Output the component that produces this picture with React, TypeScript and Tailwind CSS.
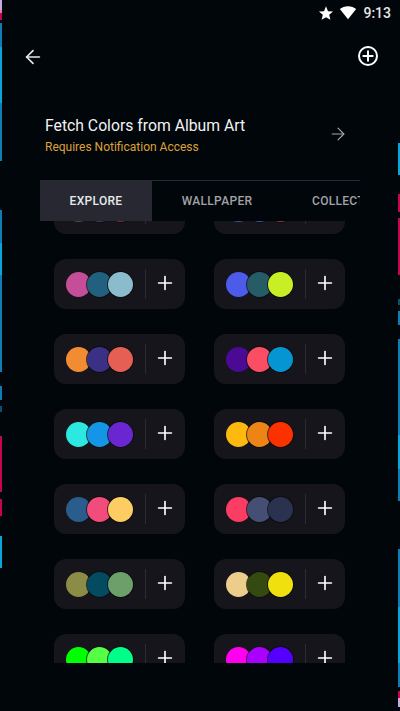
import { ArrowLeft, ArrowRight, Plus } from 'lucide-react';

const BLUE = '#0f7db4';
const CYAN = '#0ba6d9';
const DARK = '#0b4f73';
const RED = '#c4064f';
const GAP = 'transparent';

type Seg = readonly [number, string];

const LEFT_STRIP: Seg[] = [
  [10, '#c9a8de'], [3, '#d77fb0'], [7, RED], [3, GAP], [24, BLUE], [56, CYAN], [58, BLUE], [49, GAP],
  [33, BLUE], [32, CYAN], [97, BLUE], [14, GAP], [14, BLUE], [6, GAP], [6, DARK], [24, GAP], [56, RED],
  [7, GAP], [17, RED], [20, GAP], [32, CYAN],
];

const RIGHT_STRIP: Seg[] = [
  [143, GAP], [32, CYAN], [19, GAP], [18, RED], [6, GAP], [57, RED], [24, GAP], [6, DARK], [6, GAP],
  [14, BLUE], [14, GAP], [96, BLUE], [34, CYAN], [32, BLUE], [48, GAP], [58, BLUE], [56, CYAN], [24, BLUE],
  [4, GAP], [7, RED], [9, '#c9a8de'],
];

const PALETTES: string[][] = [
  ['#4a4a52', '#33406e', '#7a2f35'],
  ['#3f4fa8', '#3a57a8', '#8a3a35'],
  ['#c44f98', '#21607f', '#8bbccd'],
  ['#4d5bea', '#255c66', '#c8ee26'],
  ['#f28c33', '#3a3184', '#e65f55'],
  ['#4b0a93', '#fb4e64', '#0695d3'],
  ['#2ce8e0', '#1495e6', '#6a26d0'],
  ['#fdb90e', '#ec8416', '#fb3200'],
  ['#2b5d8c', '#f24c7c', '#fdcc62'],
  ['#fb3c63', '#454f74', '#2b324f'],
  ['#8b8c45', '#024b60', '#6c9f69'],
  ['#edcd8b', '#344a10', '#f0e10e'],
  ['#00ff00', '#55ff44', '#00ff88'],
  ['#ff00ee', '#aa00ff', '#5500ff'],
];

function Strip({ segments }: { segments: Seg[] }) {
  return (
    <div className="flex w-[2px] shrink-0 flex-col">
      {segments.map(([height, color], i) => (
        <div key={i} style={{ height, backgroundColor: color }} />
      ))}
    </div>
  );
}

function PaletteCard({ colors }: { colors: string[] }) {
  return (
    <div className="flex h-[50px] w-[131px] items-center rounded-[12px] bg-[#15151b] pl-[12px]">
      <div className="flex w-[67px] shrink-0">
        {colors.map((color, i) => (
          <span
            key={i}
            className={`h-[25px] w-[25px] shrink-0 rounded-full ${i > 0 ? '-ml-[4px] shadow-[0_0_0_1px_rgba(10,10,14,0.7)]' : ''}`}
            style={{ backgroundColor: color }}
          />
        ))}
      </div>
      <span className="ml-[12px] h-[30px] w-px bg-[#2b2b31]" />
      <span className="flex flex-1 justify-center pr-[2px]">
        <Plus className="-mt-[2px] h-[22px] w-[22px] text-white" strokeWidth={1.8} />
      </span>
    </div>
  );
}

export default function App() {
  return (
    <div className="flex h-[711px] w-[400px] overflow-hidden bg-[#01060b] font-['Roboto',sans-serif] text-white">
      <Strip segments={LEFT_STRIP} />
      <div className="flex min-w-0 flex-1 flex-col">
        <div className="flex h-[24px] items-center justify-end pr-[7px] pt-px">
          <svg viewBox="0 0 24 24" className="h-[16px] w-[16px] fill-white">
            <path d="M12 2l3 7.2 7.6.6-5.8 5 1.8 7.500L12 18.300l-6.600 4 1.800-7.500-5.800-5L9 9.200z" />
          </svg>
          <svg viewBox="0 0 24 24" className="ml-[5px] h-[17px] w-[18px] fill-white">
            <path d="M12 21.500L0.500 7C3.500 4.500 7.500 3 12 3s8.500 1.500 11.500 4z" />
          </svg>
          <span className="ml-[6px] text-[14px] font-medium leading-none text-[#e6e6e6]">9:13</span>
        </div>

        <div className="flex h-[64px] items-center justify-between pl-[20px] pr-[20px]">
          <ArrowLeft className="mt-[2px] h-[22px] w-[22px] text-[#e8e8e8]" strokeWidth={1.8} />
          <div className="flex h-[20px] w-[20px] items-center justify-center rounded-full border-2 border-white">
            <Plus className="h-[16px] w-[16px] shrink-0 text-white" strokeWidth={3} />
          </div>
        </div>

        <div className="mt-[28px] flex items-center justify-between pl-[43px] pr-[50px]">
          <div className="flex flex-col">
            <span className="text-[15.75px] leading-[20px] text-[#f2f2f2]">Fetch Colors from Album Art</span>
            <span className="mt-[1px] text-[12px] leading-[20px] text-[#dfa236]">Requires Notification Access</span>
          </div>
          <ArrowRight className="-mt-[5px] h-[20px] w-[20px] text-[#a8a8a8]" strokeWidth={1.3} />
        </div>

        <div className="mx-[38px] mt-[23px] flex h-[41px] overflow-hidden border-t border-[#282a33] text-[12px] font-medium tracking-[0.3px]">
          <div className="flex w-[112px] shrink-0 items-center justify-center bg-[#272832] text-[#e8e8ea]">EXPLORE</div>
          <div className="flex w-[130px] shrink-0 items-center justify-center pl-[2px] pr-[2px] text-[#a2a3a6]">WALLPAPER</div>
          <div className="flex shrink-0 items-center whitespace-nowrap pl-[30px] text-[#a2a3a6]">COLLECTIONS</div>
        </div>

        <div className="mx-[38px] h-[442px] overflow-hidden">
          <div className="-mt-[37px] grid grid-cols-[131px_131px] gap-x-[29px] gap-y-[25px] pl-[14px]">
            {PALETTES.map((colors, i) => (
              <PaletteCard key={i} colors={colors} />
            ))}
          </div>
        </div>
      </div>
      <Strip segments={RIGHT_STRIP} />
    </div>
  );
}
